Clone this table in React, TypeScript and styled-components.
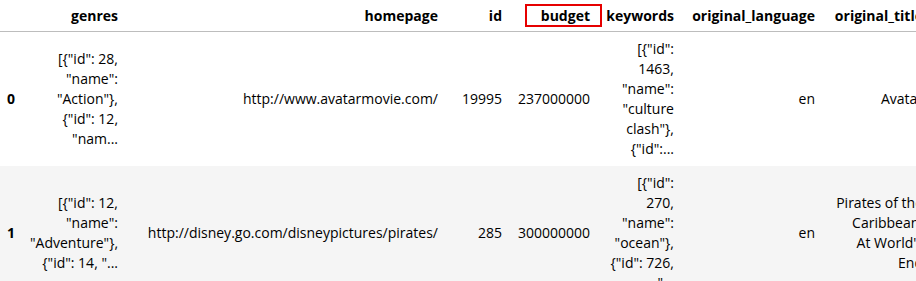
import styled, { createGlobalStyle } from "styled-components";

type Movie = {
  index: number;
  genres: string[];
  homepage: string;
  id: number;
  budget: number;
  keywords: string[];
  language: string;
  title: string[];
};

type CellProps = {
  $w: number;
};

const movies: Movie[] = [
  {
    index: 0,
    genres: ['[{"id": 28,', '"name":', '"Action"},', '{"id": 12,', '"nam...'],
    homepage: "http://www.avatarmovie.com/",
    id: 19995,
    budget: 237000000,
    keywords: ['[{"id":', "1463,", '"name":', '"culture', 'clash"},', '{"id":...'],
    language: "en",
    title: ["Avatar"],
  },
  {
    index: 1,
    genres: ['[{"id": 12,', '"name":', '"Adventure"},', '{"id": 14, "...'],
    homepage: "http://disney.go.com/disneypictures/pirates/",
    id: 285,
    budget: 300000000,
    keywords: ['[{"id":', "270,", '"name":', '"ocean"},', '{"id": 726,', '"...'],
    language: "en",
    title: ["Pirates of the", "Caribbean:", "At World's", "End"],
  },
];

// widths of the cells, padding included
const widths = [20, 105, 320, 64, 88, 84, 141, 108];

const Lines = ({ lines }: { lines: string[] }) => (
  <>
    {lines.map((l, i) => (
      <span key={i}>
        {l}
        {i < lines.length - 1 && <br />}
      </span>
    ))}
  </>
);

const App = () => {
  return (
    <>
      <GlobalStyle />
      <Frame>
        <Table>
          <colgroup>
            {widths.map((w, i) => (
              <col key={i} style={{ width: w }} />
            ))}
          </colgroup>
          <thead>
            <HeadRow>
              <HeadCell $w={widths[0]}></HeadCell>
              <HeadCell $w={widths[1]}>genres</HeadCell>
              <HeadCell $w={widths[2]}>homepage</HeadCell>
              <HeadCell $w={widths[3]}>id</HeadCell>
              <HeadCell $w={widths[4]}>
                budget
                <Marker />
              </HeadCell>
              <HeadCell $w={widths[5]}>keywords</HeadCell>
              <HeadCell $w={widths[6]}>original_language</HeadCell>
              <HeadCell $w={widths[7]}>original_title</HeadCell>
            </HeadRow>
          </thead>
          <tbody>
            {movies.map((m) => (
              <BodyRow key={m.index} $striped={m.index % 2 === 1}>
                <IndexCell>{m.index}</IndexCell>
                <Cell>
                  <Lines lines={m.genres} />
                </Cell>
                <Cell>{m.homepage}</Cell>
                <Cell>{m.id}</Cell>
                <Cell>{m.budget}</Cell>
                <Cell>
                  <Lines lines={m.keywords} />
                </Cell>
                <Cell>{m.language}</Cell>
                <Cell>
                  <Lines lines={m.title} />
                </Cell>
              </BodyRow>
            ))}
          </tbody>
        </Table>
      </Frame>
    </>
  );
};

export default App;

const GlobalStyle = createGlobalStyle`
  html, body {
    margin: 0;
    padding: 0;
    background: #ffffff;
    overflow: hidden;
  }
  body {
    font-family: "Open Sans", "Noto Sans", "Liberation Sans", sans-serif;
    font-size: 14px;
    color: #000000;
  }
`;

const Frame = styled.div`
  width: 916px;
  height: 281px;
  overflow: hidden;
`;

const Table = styled.table`
  table-layout: fixed;
  border-collapse: collapse;
  border-spacing: 0;
  width: 930px;
`;

const HeadRow = styled.tr`
  border-bottom: 1px solid #bdbdbd;
`;

const HeadCell = styled.th<CellProps>`
  position: relative;
  width: ${(p) => p.$w}px;
  padding: 7px 7px;
  line-height: 17px;
  font-weight: 700;
  text-align: right;
  white-space: nowrap;
  vertical-align: middle;
`;

const Marker = styled.span`
  position: absolute;
  left: 16px;
  top: 4px;
  width: 73px;
  height: 19px;
  border: 2px solid #e60000;
`;

const BodyRow = styled.tr<{ $striped: boolean }>`
  background: ${(p) => (p.$striped ? "#f5f5f5" : "#ffffff")};
`;

const Cell = styled.td`
  padding: 7px;
  line-height: 20px;
  text-align: right;
  vertical-align: middle;
  white-space: nowrap;
`;

const IndexCell = styled.th`
  padding: 7px;
  line-height: 20px;
  font-weight: 700;
  text-align: right;
  vertical-align: middle;
`;
